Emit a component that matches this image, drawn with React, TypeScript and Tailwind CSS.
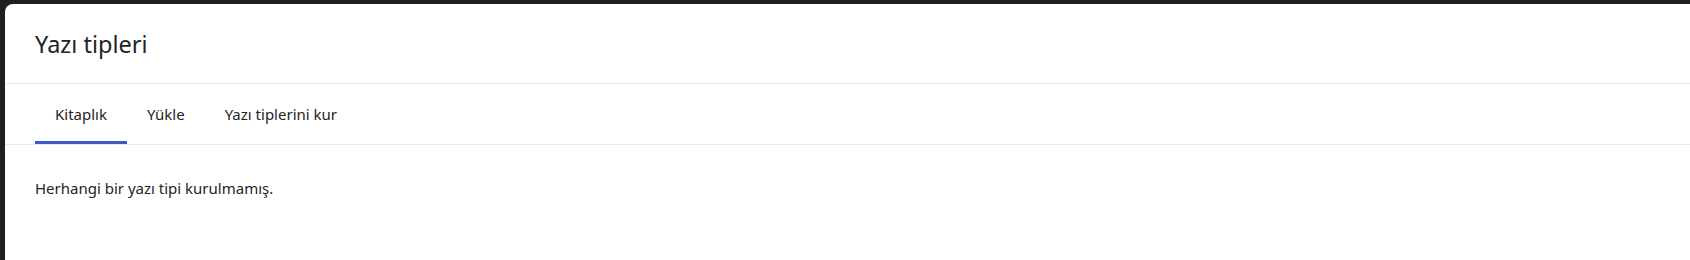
import React from "react";

const tabs = ["Kitaplık", "Yükle", "Yazı tiplerini kur"];

function App() {
    return (
        <div className="h-[260px] bg-[#1f1f1f] pt-[4px] pl-[5px] font-['Noto_Sans',sans-serif] text-[#242424]">
            <div className="h-full bg-white rounded-tl-[8px] flex flex-col">
                <div className="h-[80px] px-[30px] flex items-center border-b border-[#e6e6e6]">
                    <h1 className="text-[23.5px] leading-[32px]">Yazı tipleri</h1>
                </div>
                <div className="flex px-[30px] border-b border-[#ebebeb]">
                    {tabs.map((t, i) => (
                        <div
                            key={t}
                            className={
                                i === 0
                                    ? "h-[60px] px-5 flex items-center text-[15px] border-b-[3px] border-[#3b5cc4] pt-[4px]"
                                    : "h-[60px] px-5 flex items-center text-[15px] border-b-[3px] border-transparent pt-[4px]"
                            }
                        >
                            {t}
                        </div>
                    ))}
                </div>
                <div className="px-[30px] pt-[33px] text-[15px] leading-[20px]">
                    Herhangi bir yazı tipi kurulmamış.
                </div>
            </div>
        </div>
    );
}

export default App;
